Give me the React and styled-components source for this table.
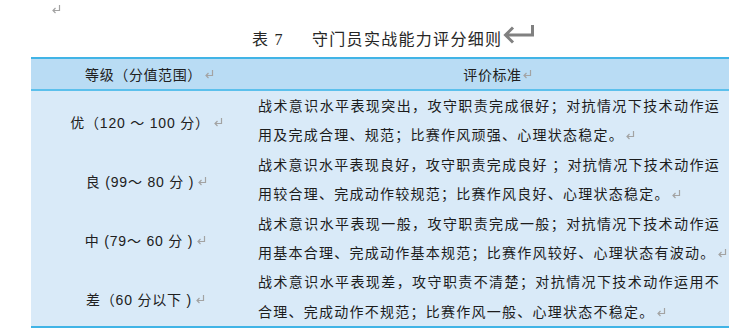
import React from "react";
import styled, { createGlobalStyle } from "styled-components";

const GlobalStyle = createGlobalStyle`
  html, body {
    margin: 0;
    padding: 0;
    background: #ffffff;
  }
  * {
    box-sizing: border-box;
  }
`;

const Page = styled.div`
  width: 733px;
  height: 336px;
  display: flex;
  flex-direction: column;
  background: #ffffff;
  color: #1c1c1c;
  font-family: "Liberation Sans", "Noto Sans CJK SC", sans-serif;
`;

const TopMark = styled.div`
  height: 18px;
  padding: 4px 0 0 51px;
  display: flex;
`;

const Title = styled.div`
  height: 39px;
  padding: 0 0 0 252px;
  display: flex;
  align-items: center;
  font-family: "Liberation Serif", "Noto Sans CJK SC", serif;
  font-size: 16px;
  letter-spacing: 1.3px;
  color: #262626;
`;

const TitleNo = styled.span`
  width: 60px;
`;

const Table = styled.div`
  margin-left: 31px;
  width: 698px;
  display: grid;
  grid-template-columns: 227px 471px;
  border-top: 2px solid #41b4e6;
  border-bottom: 2px solid #41b4e6;
`;

const HeadCell = styled.div`
  height: 32px;
  background: #b9dcf4;
  border-bottom: 2px solid #5cc0ec;
  display: flex;
  align-items: center;
  justify-content: center;
  padding-left: ${(p) => p.$shift || 0}px;
  font-size: 14px;
  letter-spacing: 0.6px;
  color: #202020;
`;

const GradeCell = styled.div`
  height: 58.8px;
  background: #d9eaf8;
  display: flex;
  align-items: center;
  justify-content: center;
  padding: 4px 0 0 ${(p) => p.$shift || 0}px;
  font-size: 14px;
  letter-spacing: 0.8px;
  color: #202020;
  white-space: pre;
`;

const DescCell = styled.div`
  height: 58.8px;
  min-width: 0;
  background: #d9eaf8;
  font-family: "Noto Sans CJK SC", "Liberation Sans", sans-serif;
  font-size: 14px;
  line-height: 29.4px;
  letter-spacing: 1.25px;
  color: #1c1c1c;
`;

const FullLine = styled.div`
  white-space: pre;
  display: flex;
  justify-content: space-between;
  margin-right: 10px;
  letter-spacing: 0;
`;

const LastLine = styled.div`
  white-space: nowrap;
  display: flex;
  align-items: center;
`;

const Mark = styled.svg`
  flex: none;
  margin-left: ${(p) => p.$gap || 0}px;
`;

const ReturnMark = ({ gap }) => (
  <Mark $gap={gap} width="10" height="10" viewBox="0 0 10 10">
    <path
      d="M8.5 1 V6.5 H2 M4.5 4 L2 6.5 L4.5 9"
      fill="none"
      stroke="#a3a3a3"
      strokeWidth="1.2"
    />
  </Mark>
);

const BigArrow = () => (
  <svg width="32" height="22" viewBox="0 0 32 22" style={{ marginLeft: 1, marginTop: -6 }}>
    <path
      d="M29.5 1 V11 H2.5 M10 3.5 L2.5 11 L10 18.5"
      fill="none"
      stroke="#808080"
      strokeWidth="3"
    />
  </svg>
);

const rows = [
  {
    grade: "优（120 ～ 100 分）",
    shift: 4,
    lines: [
      "战术意识水平表现突出，攻守职责完成很好；对抗情况下技术动作运",
      "用及完成合理、规范；比赛作风顽强、心理状态稳定。",
    ],
  },
  {
    grade: "良 (99～ 80 分 )",
    shift: 4,
    lines: [
      "战术意识水平表现良好，攻守职责完成良好\u00a0；对抗情况下技术动作运",
      "用较合理、完成动作较规范；比赛作风良好、心理状态稳定。",
    ],
  },
  {
    grade: "中 (79～ 60 分 )",
    shift: 2,
    lines: [
      "战术意识水平表现一般，攻守职责完成一般；对抗情况下技术动作运",
      "用基本合理、完成动作基本规范；比赛作风较好、心理状态有波动。",
    ],
  },
  {
    grade: "差（60 分以下 )",
    shift: 2,
    lines: [
      "战术意识水平表现差，攻守职责不清楚；对抗情况下技术动作运用不",
      "合理、完成动作不规范；比赛作风一般、心理状态不稳定。",
    ],
  },
];

const App = () => {
  return (
    <>
      <GlobalStyle />
      <Page>
        <TopMark>
          <ReturnMark gap={0} />
        </TopMark>
        <Title>
          <TitleNo>表 7</TitleNo>
          <span>守门员实战能力评分细则</span>
          <BigArrow />
        </Title>
        <Table>
          <HeadCell $shift={10}>
            等级（分值范围）
            <ReturnMark gap={2} />
          </HeadCell>
          <HeadCell $shift={8}>
            评价标准
            <ReturnMark gap={0} />
          </HeadCell>
          {rows.map((row) => (
            <React.Fragment key={row.grade}>
              <GradeCell $shift={row.shift}>
                {row.grade}
                <ReturnMark gap={3} />
              </GradeCell>
              <DescCell>
                <FullLine>
                  {row.lines[0].split("").map((ch, i) => (
                    <span key={i}>{ch}</span>
                  ))}
                </FullLine>
                <LastLine>
                  {row.lines[1]}
                  <ReturnMark gap={1} />
                </LastLine>
              </DescCell>
            </React.Fragment>
          ))}
        </Table>
      </Page>
    </>
  );
};

export default App;
